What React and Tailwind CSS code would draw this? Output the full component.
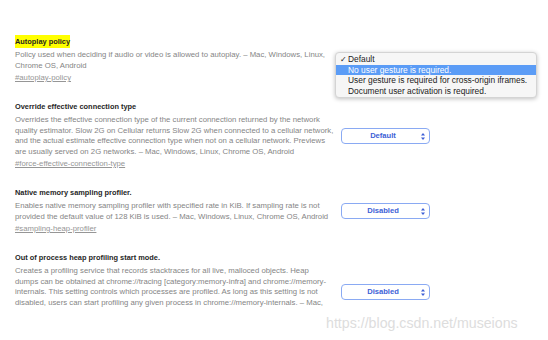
const sections = [
    {
        title: "Autoplay policy",
        highlight: true,
        lines: [
            "Policy used when deciding if audio or video is allowed to autoplay. – Mac, Windows, Linux,",
            "Chrome OS, Android",
        ],
        link: "#autoplay-policy",
        value: "Default",
    },
    {
        title: "Override effective connection type",
        lines: [
            "Overrides the effective connection type of the current connection returned by the network",
            "quality estimator. Slow 2G on Cellular returns Slow 2G when connected to a cellular network,",
            "and the actual estimate effective connection type when not on a cellular network. Previews",
            "are usually served on 2G networks. – Mac, Windows, Linux, Chrome OS, Android",
        ],
        link: "#force-effective-connection-type",
        value: "Default",
    },
    {
        title: "Native memory sampling profiler.",
        lines: [
            "Enables native memory sampling profiler with specified rate in KiB. If sampling rate is not",
            "provided the default value of 128 KiB is used. – Mac, Windows, Linux, Chrome OS, Android",
        ],
        link: "#sampling-heap-profiler",
        value: "Disabled",
    },
    {
        title: "Out of process heap profiling start mode.",
        lines: [
            "Creates a profiling service that records stacktraces for all live, malloced objects. Heap",
            "dumps can be obtained at chrome://tracing [category:memory-infra] and chrome://memory-",
            "internals. This setting controls which processes are profiled. As long as this setting is not",
            "disabled, users can start profiling any given process in chrome://memory-internals. – Mac,",
            "Windows, Linux, Chrome OS, Android",
        ],
        link: "#memlog",
        value: "Disabled",
    },
];

const menuItems = [
    "Default",
    "No user gesture is required.",
    "User gesture is required for cross-origin iframes.",
    "Document user activation is required.",
];

const SelectBox = ({ value }) => {
    return (
        <div className="relative flex h-[16px] w-[89px] shrink-0 items-center justify-center rounded-[4px] border border-[#8aaaf3] bg-white">
            <span className="pr-[5px] text-[7.6px] font-semibold leading-none text-[#3d5fd6]">{value}</span>
            <svg className="absolute right-[4px] top-[4px]" width="4" height="7" viewBox="0 0 4 7">
                <path d="M2 0 L4 2.6 L0 2.6 Z" fill="#3d5fd6" />
                <path d="M2 7 L4 4.4 L0 4.4 Z" fill="#3d5fd6" />
            </svg>
        </div>
    );
};

const Flag = ({ flag }) => {
    return (
        <div className="flex items-center">
            <div className="w-[310px] shrink-0">
                <div className="h-[12px] text-[7.4px] font-bold leading-[12px] text-[#1f1f1f]">
                    <span className={flag.highlight ? "bg-[#ffff00] py-[2px]" : ""}>{flag.title}</span>
                </div>
                <div className="mt-[2px] whitespace-nowrap text-[7.75px] leading-[10.5px] text-[#858585]">
                    {flag.lines.map((line) => (
                        <div key={line}>{line}</div>
                    ))}
                </div>
                <div className="mt-[1px] text-[7.75px] leading-[12px] text-[#969696] underline">{flag.link}</div>
            </div>
            <div className="ml-[16px]">
                <SelectBox value={flag.value} />
            </div>
        </div>
    );
};

export default function App() {
    return (
        <div
            className="relative h-[340px] w-[548px] overflow-hidden bg-white"
            style={{ fontFamily: '"Liberation Sans", Arial, sans-serif' }}
        >
            <div className="h-[310px] overflow-hidden pl-[15px] pt-[36px]">
                <div className="flex flex-col gap-[17px]">
                    {sections.map((flag) => (
                        <Flag key={flag.title} flag={flag} />
                    ))}
                </div>
            </div>

            <div className="absolute left-[335px] top-[52px] w-[202px] rounded-[4px] border border-[#d4d4d4] bg-[#f6f6f6] py-[1px] shadow-[0_1px_4px_rgba(0,0,0,0.25)]">
                {menuItems.map((item, i) => (
                    <div
                        key={item}
                        className={
                            i === 1
                                ? "relative h-[10.5px] bg-[#5b9cf6] pl-[12px] text-[8.4px] leading-[10.5px] text-white"
                                : "relative h-[10.5px] pl-[12px] text-[8.4px] leading-[10.5px] text-[#222]"
                        }
                    >
                        {i === 0 && <span className="absolute left-[4px] top-0">✓</span>}
                        {item}
                    </div>
                ))}
            </div>

            <div className="absolute left-[326px] top-[314px] text-[14.2px] leading-[18px] text-[#dddddd]">
                https://blog.csdn.net/museions
            </div>
        </div>
    );
}
